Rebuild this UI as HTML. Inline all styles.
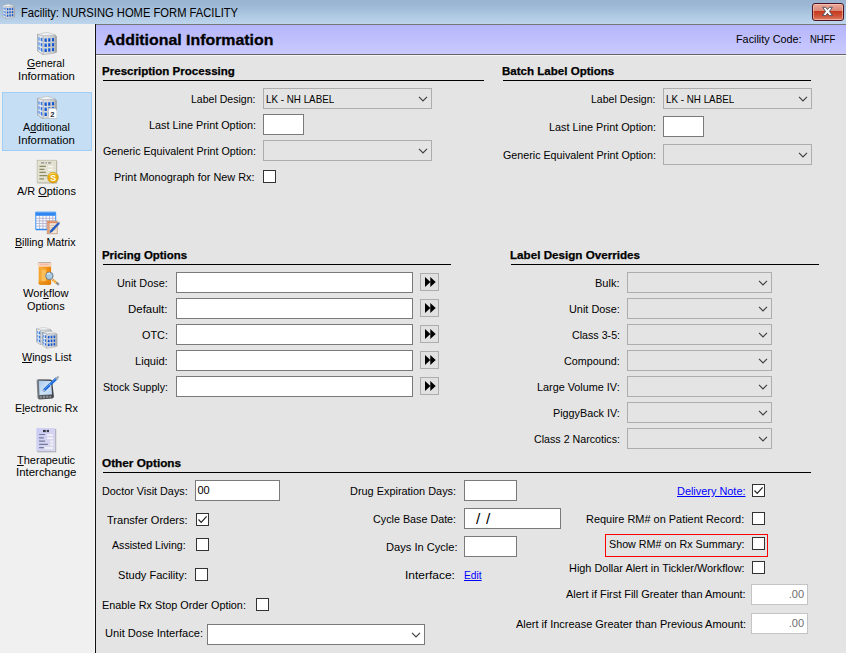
<!DOCTYPE html>
<html><head><meta charset="utf-8"><title>Facility</title>
<style>
html,body{margin:0;padding:0}
body{width:846px;height:653px;position:relative;overflow:hidden;background:#e4e4e4;font-family:"Liberation Sans",sans-serif;font-size:11px;color:#000}
#title{position:absolute;left:0;top:0;width:846px;height:24px;background:linear-gradient(#99b3d0 0%,#9db8d5 25%,#aac5df 55%,#b5cee7 80%,#bdd6ed 100%)}
#close{position:absolute;left:812px;top:3px;width:30px;height:16px;border:1px solid #4c1422;border-radius:3px;background:linear-gradient(#eaa999 0%,#dc8a78 41%,#c53a1d 45%,#cf5338 75%,#de8068 100%);box-shadow:inset 0 0 0 1px rgba(255,210,195,.55)}
#close svg{position:absolute;left:0;top:0}
#side{position:absolute;left:0;top:24px;width:94px;height:629px;background:#f0f0f0;border-right:1px solid #f8f8f8}
#sideb{position:absolute;left:95px;top:24px;width:1px;height:629px;background:#111}
#hdr{position:absolute;left:96px;top:24px;width:750px;height:31px;background:linear-gradient(#b5b5fb,#cacaff);border-top:1px solid #777;border-bottom:1px solid #666;box-sizing:border-box}
#hdrw{position:absolute;left:96px;top:55px;width:750px;height:1px;background:#f6f6f6}
.t{position:absolute;white-space:pre;line-height:16px;height:16px;font-size:11px;transform-origin:left center}
.t.h{line-height:20px;height:20px;margin-top:-2px}
.sec{font-weight:bold;-webkit-text-stroke:.25px #000}
.h{font-weight:bold;-webkit-text-stroke:.3px #000}
.hr{position:absolute;height:1px;background:#000}
.lnk{color:#0000ff;text-decoration:underline}
.sel{position:absolute;border:1px solid #adadad;background:#e4e4e4}
.sel.w{background:#fff;border-color:#7a7a7a}
.sel .st{position:absolute;left:3px;top:1px;line-height:16px;white-space:pre;transform-origin:left center;transform:scaleX(.96)}
.sel .chev{position:absolute;right:3px;top:50%;margin-top:-2.6px}
.inp{position:absolute;border:1px solid #7a7a7a;background:#fff}
.inp span{position:absolute;left:1.4px;top:2px;line-height:15px;white-space:pre}
.inp.date span{left:11.2px;top:3px;font-size:14px}
.inp.date i{font-style:normal;display:inline-block;width:9.9px;transform:scaleX(1.1);transform-origin:left center}
.inp.amt{border-color:#c4c4c4}
.inp.amt span{left:auto;right:3px;color:#6d6d6d;top:2px}
.cb{position:absolute;width:11px;height:11px;border:1px solid #333;background:#fff}
.btn{position:absolute;width:17px;height:16px;border:1px solid #adadad;background:#e1e1e1}
.btn svg{position:absolute;left:3.6px;top:3.2px}
.red{position:absolute;border:1px solid #f00}
.ico{position:absolute}
u{text-decoration:underline}
</style></head><body>
<div id="title"><div id="close"><svg width="30" height="16" viewBox="1 1 30 16"><path d="M10.7 4.3 L13.7 4.3 L15.5 6.5 L17.3 4.3 L20.3 4.3 L17.5 8.4 L20.5 12.6 L17.3 12.6 L15.5 10.3 L13.7 12.6 L10.5 12.6 L13.5 8.4 Z" fill="#fff" stroke="#454b5e" stroke-width=".9" stroke-linejoin="round"/></svg></div></div>
<svg class="ico" style="left:1.9px;top:4px" width="13.2" height="14.8" viewBox="0 0 20.2 23.2" preserveAspectRatio="none">
<defs><linearGradient id="bf5" x1="0" x2="1"><stop offset="0" stop-color="#e2e3e4"/><stop offset="1" stop-color="#bfc1c3"/></linearGradient>
<linearGradient id="bl5" x1="0" x2="1"><stop offset="0" stop-color="#c9cdd2"/><stop offset=".5" stop-color="#f2f3f5"/><stop offset="1" stop-color="#e2e4e7"/></linearGradient>
<linearGradient id="bw5" x1="0" x2="0" y1="0" y2="1"><stop offset="0" stop-color="#1f68e0"/><stop offset="1" stop-color="#0a48c0"/></linearGradient></defs>
<path d="M18 3.2 L20 4.2 L20 20.2 L18 21 Z" fill="#a4a8ac"/>
<path d="M0.3 2.4 L6.3 3.7 L6.3 22.8 L0.3 18.7 Z" fill="url(#bl5)" stroke="#858a8f" stroke-width=".6"/>
<path d="M6.3 3.7 L18.2 3.2 L18.2 21 L6.3 22.8 Z" fill="url(#bf5)" stroke="#a0a4a8" stroke-width=".5"/>
<path d="M0.3 2.4 L10.2 0.3 L18.9 3.1 L6.5 3.8 Z" fill="#f1f2f3" stroke="#a9adb1" stroke-width=".5"/>
<linearGradient id="bx5" x1="0" x2="1"><stop offset="0" stop-color="#7fb0f2"/><stop offset="1" stop-color="#2467d8"/></linearGradient>
<g fill="url(#bx5)">
<path d="M1.1 5 L5.3 6 L5.3 9.6 L1.1 8.2 Z"/>
<path d="M1.1 9.8 L5.3 11.3 L5.3 14.8 L1.1 12.9 Z"/>
<path d="M1.1 14.3 L5.3 16.5 L5.3 20 L1.1 17.3 Z"/></g>
<path d="M3.2 4 L3.2 20" stroke="#eef1f4" stroke-width=".9"/>
<g fill="url(#bw5)">
<rect x="7.5" y="6.4" width="2.3" height="3.4"/><rect x="11.2" y="6.2" width="2.2" height="3.4"/><rect x="15" y="6" width="2.1" height="3.3"/>
<rect x="7.5" y="11.5" width="2.3" height="3.4"/><rect x="11.2" y="11.2" width="2.2" height="3.4"/><rect x="15" y="11" width="2.1" height="3.3"/>
<rect x="7.5" y="16.6" width="2.3" height="3.4"/><rect x="11.2" y="16.2" width="2.2" height="3.4"/><rect x="15" y="15.8" width="2.1" height="3.3"/>
</g></svg>
<div id="side"></div><div id="sideb"></div>
<svg class="ico" style="left:36.8px;top:31.9px" width="20.2" height="23.2" viewBox="0 0 20.2 23.2" preserveAspectRatio="none">
<defs><linearGradient id="bf1" x1="0" x2="1"><stop offset="0" stop-color="#e2e3e4"/><stop offset="1" stop-color="#bfc1c3"/></linearGradient>
<linearGradient id="bl1" x1="0" x2="1"><stop offset="0" stop-color="#c9cdd2"/><stop offset=".5" stop-color="#f2f3f5"/><stop offset="1" stop-color="#e2e4e7"/></linearGradient>
<linearGradient id="bw1" x1="0" x2="0" y1="0" y2="1"><stop offset="0" stop-color="#1f68e0"/><stop offset="1" stop-color="#0a48c0"/></linearGradient></defs>
<path d="M18 3.2 L20 4.2 L20 20.2 L18 21 Z" fill="#a4a8ac"/>
<path d="M0.3 2.4 L6.3 3.7 L6.3 22.8 L0.3 18.7 Z" fill="url(#bl1)" stroke="#858a8f" stroke-width=".6"/>
<path d="M6.3 3.7 L18.2 3.2 L18.2 21 L6.3 22.8 Z" fill="url(#bf1)" stroke="#a0a4a8" stroke-width=".5"/>
<path d="M0.3 2.4 L10.2 0.3 L18.9 3.1 L6.5 3.8 Z" fill="#f1f2f3" stroke="#a9adb1" stroke-width=".5"/>
<linearGradient id="bx1" x1="0" x2="1"><stop offset="0" stop-color="#7fb0f2"/><stop offset="1" stop-color="#2467d8"/></linearGradient>
<g fill="url(#bx1)">
<path d="M1.1 5 L5.3 6 L5.3 9.6 L1.1 8.2 Z"/>
<path d="M1.1 9.8 L5.3 11.3 L5.3 14.8 L1.1 12.9 Z"/>
<path d="M1.1 14.3 L5.3 16.5 L5.3 20 L1.1 17.3 Z"/></g>
<path d="M3.2 4 L3.2 20" stroke="#eef1f4" stroke-width=".9"/>
<g fill="url(#bw1)">
<rect x="7.5" y="6.4" width="2.3" height="3.4"/><rect x="11.2" y="6.2" width="2.2" height="3.4"/><rect x="15" y="6" width="2.1" height="3.3"/>
<rect x="7.5" y="11.5" width="2.3" height="3.4"/><rect x="11.2" y="11.2" width="2.2" height="3.4"/><rect x="15" y="11" width="2.1" height="3.3"/>
<rect x="7.5" y="16.6" width="2.3" height="3.4"/><rect x="11.2" y="16.2" width="2.2" height="3.4"/><rect x="15" y="15.8" width="2.1" height="3.3"/>
</g></svg>
<div style="position:absolute;left:2px;top:92px;width:88px;height:57px;background:#c5def4;border:1px solid #9fcdf6"></div>
<svg class="ico" style="left:36.8px;top:95.9px" width="20.2" height="23.2" viewBox="0 0 20.2 23.2" preserveAspectRatio="none">
<defs><linearGradient id="bf2" x1="0" x2="1"><stop offset="0" stop-color="#e2e3e4"/><stop offset="1" stop-color="#bfc1c3"/></linearGradient>
<linearGradient id="bl2" x1="0" x2="1"><stop offset="0" stop-color="#c9cdd2"/><stop offset=".5" stop-color="#f2f3f5"/><stop offset="1" stop-color="#e2e4e7"/></linearGradient>
<linearGradient id="bw2" x1="0" x2="0" y1="0" y2="1"><stop offset="0" stop-color="#1f68e0"/><stop offset="1" stop-color="#0a48c0"/></linearGradient></defs>
<path d="M18 3.2 L20 4.2 L20 20.2 L18 21 Z" fill="#a4a8ac"/>
<path d="M0.3 2.4 L6.3 3.7 L6.3 22.8 L0.3 18.7 Z" fill="url(#bl2)" stroke="#858a8f" stroke-width=".6"/>
<path d="M6.3 3.7 L18.2 3.2 L18.2 21 L6.3 22.8 Z" fill="url(#bf2)" stroke="#a0a4a8" stroke-width=".5"/>
<path d="M0.3 2.4 L10.2 0.3 L18.9 3.1 L6.5 3.8 Z" fill="#f1f2f3" stroke="#a9adb1" stroke-width=".5"/>
<linearGradient id="bx2" x1="0" x2="1"><stop offset="0" stop-color="#7fb0f2"/><stop offset="1" stop-color="#2467d8"/></linearGradient>
<g fill="url(#bx2)">
<path d="M1.1 5 L5.3 6 L5.3 9.6 L1.1 8.2 Z"/>
<path d="M1.1 9.8 L5.3 11.3 L5.3 14.8 L1.1 12.9 Z"/>
<path d="M1.1 14.3 L5.3 16.5 L5.3 20 L1.1 17.3 Z"/></g>
<path d="M3.2 4 L3.2 20" stroke="#eef1f4" stroke-width=".9"/>
<g fill="url(#bw2)">
<rect x="7.5" y="6.4" width="2.3" height="3.4"/><rect x="11.2" y="6.2" width="2.2" height="3.4"/><rect x="15" y="6" width="2.1" height="3.3"/>
<rect x="7.5" y="11.5" width="2.3" height="3.4"/><rect x="11.2" y="11.2" width="2.2" height="3.4"/><rect x="15" y="11" width="2.1" height="3.3"/>
<rect x="7.5" y="16.6" width="2.3" height="3.4"/><rect x="11.2" y="16.2" width="2.2" height="3.4"/><rect x="15" y="15.8" width="2.1" height="3.3"/>
</g><path d="M11.3 12.2 L18 12.2 L20 14.2 L20 22.6 L11.3 22.6 Z" fill="#fdfdfd" stroke="#9aa2aa" stroke-width=".5"/><text x="13.2" y="20.8" font-size="7.5" font-weight="bold" font-family="Liberation Sans,sans-serif" fill="#1c2a3a">2</text></svg>
<svg class="ico" style="left:36px;top:159px" width="24" height="26" viewBox="0 0 24 26">
<rect x="1.8" y="1.9" width="19.4" height="22.6" fill="#8f8d7c" opacity=".55"/>
<rect x="1.1" y="1.2" width="19.2" height="22.6" fill="#e3e1d2" stroke="#b3b09c" stroke-width=".6"/>
<g stroke="#8a8a8a" stroke-width="1.1"><path d="M5 3.9h3.2M9.4 3.9h1.4M12 3.9h3.2"/></g>
<g stroke="#8c8b63" stroke-width="1.2"><path d="M3.4 7.4h6.4M3.4 10.4h5M3.4 13.4h6.4M3.4 16.6h8M3.4 19.8h4.6"/></g>
<g stroke="#f7f6ee" stroke-width="1.5"><path d="M12 7.6h5M12 10.8h5"/></g>
<circle cx="17" cy="18.6" r="5.3" fill="#e9ae0e"/>
<circle cx="17" cy="18.6" r="5.3" fill="none" stroke="#c48c08" stroke-width=".7"/>
<path d="M12.3 17.2 A4.9 4.9 0 0 1 20.6 15 A7.5 7.5 0 0 0 12.3 17.2Z" fill="#f9e277"/>
<text x="14.3" y="21.9" font-size="8.8" font-weight="bold" font-family="Liberation Sans,sans-serif" fill="#fff">S</text></svg>
<svg class="ico" style="left:35px;top:211px" width="25" height="24" viewBox="0 0 25 24">
<rect x="0.4" y="0.9" width="20.6" height="18.2" rx=".8" fill="#fbfbff"/>
<g stroke="#b4b4cf" stroke-width=".9"><path d="M1 7.3h19.6M1 9.9h19.6M1 12.5h19.6M1 15.1h19.6M4.6 4.6v13.6M7.9 4.6v13.6M11.2 4.6v13.6M14.5 4.6v13.6M17.8 4.6v13.6"/></g>
<rect x="0.4" y="0.9" width="20.6" height="3.9" fill="#2f87f2"/>
<path d="M0.6 1.4h20.2" stroke="#8cc4fa" stroke-width=".9"/>
<rect x="0.75" y="1.25" width="19.9" height="17.5" rx=".8" fill="none" stroke="#4b9bf3" stroke-width="1.1"/>
<path d="M0.9 18.4h19.8" stroke="#2f87f2" stroke-width="1.3"/>
<rect x="12.2" y="10" width="10" height="12.8" fill="#f3e6d8" stroke="#b98f74" stroke-width=".7"/>
<path d="M12.4 10.2h9.6v2h-9.6z" fill="#dd9068"/><path d="M12.4 10.2h2.4v12.4h-2.4z" fill="#d98c62" opacity=".75"/>
<g stroke="#b7a692" stroke-width=".7"><path d="M15.6 14.4h4M15.6 16.6h3M15.6 18.8h5"/></g>
<path d="M15.4 19.6 L23.2 11.4 L24.5 12.8 L16.8 20.9 L15 21.5 Z" fill="#1f5fcf" stroke="#17408f" stroke-width=".5"/>
<path d="M23.2 11.4 L24.2 10.6 L25 11.6 L24.5 12.8Z" fill="#9aa3ad"/></svg>
<svg class="ico" style="left:36px;top:261px" width="24" height="25" viewBox="0 0 24 25">
<defs><linearGradient id="wb" x1="0" x2="1"><stop offset="0" stop-color="#f6a024"/><stop offset=".2" stop-color="#f7ab3a"/><stop offset=".75" stop-color="#f18f10"/><stop offset="1" stop-color="#e67e06"/></linearGradient>
<linearGradient id="wb2" x1="0" x2="0" y1="0" y2="1"><stop offset="0.7" stop-color="#e88408" stop-opacity="0"/><stop offset="1" stop-color="#d97604" stop-opacity=".8"/></linearGradient></defs>
<rect x="2.7" y="5" width="12.4" height="18.7" rx="1.4" fill="url(#wb)"/>
<rect x="2.7" y="5" width="12.4" height="18.7" rx="1.4" fill="url(#wb2)"/>
<rect x="5.6" y="8.6" width="4.4" height="11.4" fill="#f9c465" opacity=".85"/>
<rect x="1.7" y="1.5" width="13.9" height="4.3" rx="1" fill="#f8d3bd"/>
<path d="M2.4 1.5h12.5" stroke="#a9a5a3" stroke-width=".8"/>
<path d="M4 3.4h9" stroke="#f6b8a0" stroke-width="1.2"/>
<path d="M16.6 18.6 L21.4 22.6" stroke="#f08a2a" stroke-width="2.3"/>
<path d="M17.6 19.5l.9.7M19.3 20.9l.9.7" stroke="#f8dc6a" stroke-width="2.3"/>
<path d="M21 22.2 L22.2 23.2" stroke="#8e9399" stroke-width="2.3" stroke-linecap="round"/>
<circle cx="13.4" cy="14.9" r="3.7" fill="#a9cbe3" stroke="#737b83" stroke-width="1"/>
<path d="M11.2 13.6 A2.6 2.6 0 0 1 14 12.2" stroke="#e8f3fa" stroke-width="1.1" fill="none"/></svg>
<svg class="ico" style="left:36px;top:326.6px" width="16" height="18.4" viewBox="0 0 20.2 23.2" preserveAspectRatio="none">
<defs><linearGradient id="bf3" x1="0" x2="1"><stop offset="0" stop-color="#e2e3e4"/><stop offset="1" stop-color="#bfc1c3"/></linearGradient>
<linearGradient id="bl3" x1="0" x2="1"><stop offset="0" stop-color="#c9cdd2"/><stop offset=".5" stop-color="#f2f3f5"/><stop offset="1" stop-color="#e2e4e7"/></linearGradient>
<linearGradient id="bw3" x1="0" x2="0" y1="0" y2="1"><stop offset="0" stop-color="#1f68e0"/><stop offset="1" stop-color="#0a48c0"/></linearGradient></defs>
<path d="M18 3.2 L20 4.2 L20 20.2 L18 21 Z" fill="#a4a8ac"/>
<path d="M0.3 2.4 L6.3 3.7 L6.3 22.8 L0.3 18.7 Z" fill="url(#bl3)" stroke="#858a8f" stroke-width=".6"/>
<path d="M6.3 3.7 L18.2 3.2 L18.2 21 L6.3 22.8 Z" fill="url(#bf3)" stroke="#a0a4a8" stroke-width=".5"/>
<path d="M0.3 2.4 L10.2 0.3 L18.9 3.1 L6.5 3.8 Z" fill="#f1f2f3" stroke="#a9adb1" stroke-width=".5"/>
<linearGradient id="bx3" x1="0" x2="1"><stop offset="0" stop-color="#7fb0f2"/><stop offset="1" stop-color="#2467d8"/></linearGradient>
<g fill="url(#bx3)">
<path d="M1.1 5 L5.3 6 L5.3 9.6 L1.1 8.2 Z"/>
<path d="M1.1 9.8 L5.3 11.3 L5.3 14.8 L1.1 12.9 Z"/>
<path d="M1.1 14.3 L5.3 16.5 L5.3 20 L1.1 17.3 Z"/></g>
<path d="M3.2 4 L3.2 20" stroke="#eef1f4" stroke-width=".9"/>
<g fill="url(#bw3)">
<rect x="7.5" y="6.4" width="2.3" height="3.4"/><rect x="11.2" y="6.2" width="2.2" height="3.4"/><rect x="15" y="6" width="2.1" height="3.3"/>
<rect x="7.5" y="11.5" width="2.3" height="3.4"/><rect x="11.2" y="11.2" width="2.2" height="3.4"/><rect x="15" y="11" width="2.1" height="3.3"/>
<rect x="7.5" y="16.6" width="2.3" height="3.4"/><rect x="11.2" y="16.2" width="2.2" height="3.4"/><rect x="15" y="15.8" width="2.1" height="3.3"/>
</g></svg>
<svg class="ico" style="left:42.4px;top:331.2px" width="15.6" height="17.5" viewBox="0 0 20.2 23.2" preserveAspectRatio="none">
<defs><linearGradient id="bf4" x1="0" x2="1"><stop offset="0" stop-color="#e2e3e4"/><stop offset="1" stop-color="#bfc1c3"/></linearGradient>
<linearGradient id="bl4" x1="0" x2="1"><stop offset="0" stop-color="#c9cdd2"/><stop offset=".5" stop-color="#f2f3f5"/><stop offset="1" stop-color="#e2e4e7"/></linearGradient>
<linearGradient id="bw4" x1="0" x2="0" y1="0" y2="1"><stop offset="0" stop-color="#1f68e0"/><stop offset="1" stop-color="#0a48c0"/></linearGradient></defs>
<path d="M18 3.2 L20 4.2 L20 20.2 L18 21 Z" fill="#a4a8ac"/>
<path d="M0.3 2.4 L6.3 3.7 L6.3 22.8 L0.3 18.7 Z" fill="url(#bl4)" stroke="#858a8f" stroke-width=".6"/>
<path d="M6.3 3.7 L18.2 3.2 L18.2 21 L6.3 22.8 Z" fill="url(#bf4)" stroke="#a0a4a8" stroke-width=".5"/>
<path d="M0.3 2.4 L10.2 0.3 L18.9 3.1 L6.5 3.8 Z" fill="#f1f2f3" stroke="#a9adb1" stroke-width=".5"/>
<linearGradient id="bx4" x1="0" x2="1"><stop offset="0" stop-color="#7fb0f2"/><stop offset="1" stop-color="#2467d8"/></linearGradient>
<g fill="url(#bx4)">
<path d="M1.1 5 L5.3 6 L5.3 9.6 L1.1 8.2 Z"/>
<path d="M1.1 9.8 L5.3 11.3 L5.3 14.8 L1.1 12.9 Z"/>
<path d="M1.1 14.3 L5.3 16.5 L5.3 20 L1.1 17.3 Z"/></g>
<path d="M3.2 4 L3.2 20" stroke="#eef1f4" stroke-width=".9"/>
<g fill="url(#bw4)">
<rect x="7.5" y="6.4" width="2.3" height="3.4"/><rect x="11.2" y="6.2" width="2.2" height="3.4"/><rect x="15" y="6" width="2.1" height="3.3"/>
<rect x="7.5" y="11.5" width="2.3" height="3.4"/><rect x="11.2" y="11.2" width="2.2" height="3.4"/><rect x="15" y="11" width="2.1" height="3.3"/>
<rect x="7.5" y="16.6" width="2.3" height="3.4"/><rect x="11.2" y="16.2" width="2.2" height="3.4"/><rect x="15" y="15.8" width="2.1" height="3.3"/>
</g></svg>
<svg class="ico" style="left:35px;top:375px" width="25" height="26" viewBox="0 0 25 26">
<defs><linearGradient id="pd" x1="0" x2="1"><stop offset="0" stop-color="#8f9499"/><stop offset=".18" stop-color="#5b6066"/><stop offset="1" stop-color="#3d4045"/></linearGradient>
<linearGradient id="ps" x1="0" x2="1" y1="0" y2="1"><stop offset="0" stop-color="#a9c9ee"/><stop offset=".55" stop-color="#cfe2f7"/><stop offset="1" stop-color="#bcd6f3"/></linearGradient></defs>
<path d="M1.6 6 Q1.3 4.2 3.2 4.2 L15.4 4.6 Q17 4.7 17.2 6.2 L18.9 21.6 Q19 23.3 17.2 23.5 L4.6 24.6 Q2.7 24.6 2.5 22.8 Z" fill="url(#pd)"/>
<path d="M3.9 5.8 L16 6 L17 19.6 L4.4 20 Z" fill="url(#ps)"/>
<g fill="#8b9096"><rect x="5" y="21.2" width="1.9" height="1.9"/><rect x="8" y="20.8" width="2.2" height="2.2"/><rect x="11.2" y="20.6" width="2.2" height="2.2"/><rect x="14.4" y="20.8" width="1.9" height="1.9"/></g>
<path d="M9 15.2 L21.4 3.6" stroke="#1563d6" stroke-width="2.7" stroke-linecap="round"/>
<path d="M9.4 14.4 L21 3.4" stroke="#5a9af0" stroke-width=".9"/>
<path d="M14.6 9.3 L16 10.9" stroke="#c9d2dc" stroke-width="1"/>
<path d="M21.4 3.6 L23 2.2" stroke="#a4acb5" stroke-width="2.2" stroke-linecap="round"/>
<path d="M8 16.4 L8.6 14.2 L10.2 15.8 Z" fill="#dfe4ea" stroke="#9aa2aa" stroke-width=".3"/></svg>
<svg class="ico" style="left:36px;top:427px" width="21" height="26" viewBox="0 0 21 26">
<defs><linearGradient id="td" x1="0" x2="1" y1="0" y2="1"><stop offset="0" stop-color="#c9c9f6"/><stop offset="1" stop-color="#dcdcec"/></linearGradient></defs>
<rect x="1.2" y="1.9" width="19" height="23.4" fill="#8e8e9e" opacity=".7"/>
<rect x="0.4" y="1.2" width="18.8" height="23" fill="url(#td)"/>
<rect x="7" y="2.9" width="2.7" height="2.2" fill="#34343f"/><rect x="10.7" y="2.9" width="2.3" height="2.2" fill="#3c3c48"/>
<g stroke="#747b9c" stroke-width="1.2"><path d="M3.1 7.5h5.9M3.1 10.9h4.7M3.1 14.2h5.9M3.1 17.4h8.8M3.1 20.6h4.7"/></g>
<g stroke="#f6f6fc" stroke-width="1.5"><path d="M11 8h6M11 11.2h6M14.4 14.4h2.6M14.4 17.6h2.6M8.7 20.9h8.3"/></g></svg>
<span class="t l " style="left:27.2px;top:55px;transform:scaleX(0.9581)"><u>G</u>eneral</span>
<span class="t l " style="left:18.1px;top:68px;transform:scaleX(1.0321)">Information</span>
<span class="t l " style="left:22.7px;top:119px;transform:scaleX(0.9704)">A<u>d</u>ditional</span>
<span class="t l " style="left:18.1px;top:132px;transform:scaleX(1.0321)">Information</span>
<span class="t l " style="left:17px;top:183px;transform:scaleX(0.9928)">A/R <u>O</u>ptions</span>
<span class="t l " style="left:15.4px;top:234px;transform:scaleX(0.9702)"><u>B</u>illing Matrix</span>
<span class="t l " style="left:23.4px;top:285px;transform:scaleX(1.0126)">Wor<u>k</u>flow</span>
<span class="t l " style="left:27px;top:298px;transform:scaleX(0.9915)">Options</span>
<span class="t l " style="left:22.2px;top:349px;transform:scaleX(0.9754)"><u>W</u>ings List</span>
<span class="t l " style="left:15px;top:400px;transform:scaleX(0.9703)">E<u>l</u>ectronic Rx</span>
<span class="t l " style="left:17.2px;top:451.5px;transform:scaleX(0.9998)"><u>T</u>herapeutic</span>
<span class="t l " style="left:15.8px;top:464px;transform:scaleX(1.0394)">Interchange</span>
<div id="hdr"></div><div id="hdrw"></div>
<span class="t l h" style="left:104px;top:32px;font-size:15px;transform:scaleX(1.0589)">Additional Information</span>
<span class="t l tt" style="left:20.9px;top:5px;font-size:12px;transform:scaleX(0.933)">Facility: NURSING HOME FORM FACILITY</span>
<span class="t l sec" style="left:102.2px;top:63px;transform:scaleX(1.0502)">Prescription Processing</span>
<div class="hr" style="left:103px;top:80px;width:381px"></div>
<span class="t l sec" style="left:502.2px;top:63px;transform:scaleX(1.0498)">Batch Label Options</span>
<div class="hr" style="left:503px;top:80px;width:308px"></div>
<span class="t l " style="left:190.7px;top:91px;transform:scaleX(0.9587)">Label Design:</span>
<div class="sel" style="left:263px;top:88px;width:167px;height:19px"><span class="st"></span><svg class="chev" width="10" height="6" viewBox="0 0 10 6"><path d="M1 0.8 L5 4.9 L9 0.8" fill="none" stroke="#404040" stroke-width="1.15"/></svg></div>
<span class="t l " style="left:265.7px;top:91.2px;transform:scaleX(0.8924)">LK - NH LABEL</span>
<span class="t l " style="left:148.8px;top:117px;transform:scaleX(0.984)">Last Line Print Option:</span>
<div class="inp " style="left:263px;top:114px;width:39px;height:19px"><span></span></div>
<span class="t l " style="left:102.9px;top:143px;transform:scaleX(0.9737)">Generic Equivalent Print Option:</span>
<div class="sel" style="left:263px;top:140px;width:167px;height:19px"><span class="st"></span><svg class="chev" width="10" height="6" viewBox="0 0 10 6"><path d="M1 0.8 L5 4.9 L9 0.8" fill="none" stroke="#404040" stroke-width="1.15"/></svg></div>
<span class="t l " style="left:113.6px;top:169px;transform:scaleX(0.9912)">Print Monograph for New Rx:</span>
<div class="cb" style="left:263px;top:170px"></div>
<span class="t l " style="left:590.7px;top:91px;transform:scaleX(0.9587)">Label Design:</span>
<div class="sel" style="left:663px;top:88px;width:147px;height:19px"><span class="st"></span><svg class="chev" width="10" height="6" viewBox="0 0 10 6"><path d="M1 0.8 L5 4.9 L9 0.8" fill="none" stroke="#404040" stroke-width="1.15"/></svg></div>
<span class="t l " style="left:665.7px;top:91.2px;transform:scaleX(0.8924)">LK - NH LABEL</span>
<span class="t l " style="left:548.8px;top:119px;transform:scaleX(0.984)">Last Line Print Option:</span>
<div class="inp " style="left:663px;top:116px;width:39px;height:19px"><span></span></div>
<span class="t l " style="left:502.9px;top:147px;transform:scaleX(0.9737)">Generic Equivalent Print Option:</span>
<div class="sel" style="left:663px;top:144px;width:147px;height:19px"><span class="st"></span><svg class="chev" width="10" height="6" viewBox="0 0 10 6"><path d="M1 0.8 L5 4.9 L9 0.8" fill="none" stroke="#404040" stroke-width="1.15"/></svg></div>
<span class="t l sec" style="left:102.2px;top:247px;transform:scaleX(1.039)">Pricing Options</span>
<div class="hr" style="left:103px;top:264px;width:348px"></div>
<span class="t l " style="left:116.5px;top:275px;transform:scaleX(0.9872)">Unit Dose:</span>
<div class="inp " style="left:176px;top:272px;width:235px;height:19px"><span></span></div>
<div class="btn" style="left:420px;top:273px"><svg width="11" height="10" viewBox="0 0 11 10"><path d="M0 0 L5.4 5 L0 10 Z M5.3 0 L10.7 5 L5.3 10 Z" fill="#000"/></svg></div>
<span class="t l " style="left:127.7px;top:301px;transform:scaleX(1.0416)">Default:</span>
<div class="inp " style="left:176px;top:298px;width:235px;height:19px"><span></span></div>
<div class="btn" style="left:420px;top:299px"><svg width="11" height="10" viewBox="0 0 11 10"><path d="M0 0 L5.4 5 L0 10 Z M5.3 0 L10.7 5 L5.3 10 Z" fill="#000"/></svg></div>
<span class="t l " style="left:141.9px;top:327px;transform:scaleX(0.9893)">OTC:</span>
<div class="inp " style="left:176px;top:324px;width:235px;height:19px"><span></span></div>
<div class="btn" style="left:420px;top:325px"><svg width="11" height="10" viewBox="0 0 11 10"><path d="M0 0 L5.4 5 L0 10 Z M5.3 0 L10.7 5 L5.3 10 Z" fill="#000"/></svg></div>
<span class="t l " style="left:135.2px;top:353px;transform:scaleX(1.0086)">Liquid:</span>
<div class="inp " style="left:176px;top:350px;width:235px;height:19px"><span></span></div>
<div class="btn" style="left:420px;top:351px"><svg width="11" height="10" viewBox="0 0 11 10"><path d="M0 0 L5.4 5 L0 10 Z M5.3 0 L10.7 5 L5.3 10 Z" fill="#000"/></svg></div>
<span class="t l " style="left:102.9px;top:379px;transform:scaleX(0.9663)">Stock Supply:</span>
<div class="inp " style="left:176px;top:376px;width:235px;height:19px"><span></span></div>
<div class="btn" style="left:420px;top:377px"><svg width="11" height="10" viewBox="0 0 11 10"><path d="M0 0 L5.4 5 L0 10 Z M5.3 0 L10.7 5 L5.3 10 Z" fill="#000"/></svg></div>
<span class="t l sec" style="left:510.2px;top:247px;transform:scaleX(1.0579)">Label Design Overrides</span>
<div class="hr" style="left:511px;top:264px;width:308px"></div>
<span class="t l " style="left:595.18px;top:275px;transform:scaleX(1.0025)">Bulk:</span>
<div class="sel" style="left:627px;top:272px;width:143px;height:19px"><span class="st"></span><svg class="chev" width="10" height="6" viewBox="0 0 10 6"><path d="M1 0.8 L5 4.9 L9 0.8" fill="none" stroke="#404040" stroke-width="1.15"/></svg></div>
<span class="t l " style="left:568.9px;top:301px;transform:scaleX(0.9893)">Unit Dose:</span>
<div class="sel" style="left:627px;top:298px;width:143px;height:19px"><span class="st"></span><svg class="chev" width="10" height="6" viewBox="0 0 10 6"><path d="M1 0.8 L5 4.9 L9 0.8" fill="none" stroke="#404040" stroke-width="1.15"/></svg></div>
<span class="t l " style="left:571.64px;top:327px;transform:scaleX(0.9705)">Class 3-5:</span>
<div class="sel" style="left:627px;top:324px;width:143px;height:19px"><span class="st"></span><svg class="chev" width="10" height="6" viewBox="0 0 10 6"><path d="M1 0.8 L5 4.9 L9 0.8" fill="none" stroke="#404040" stroke-width="1.15"/></svg></div>
<span class="t l " style="left:563.5px;top:353px;transform:scaleX(0.9797)">Compound:</span>
<div class="sel" style="left:627px;top:350px;width:143px;height:19px"><span class="st"></span><svg class="chev" width="10" height="6" viewBox="0 0 10 6"><path d="M1 0.8 L5 4.9 L9 0.8" fill="none" stroke="#404040" stroke-width="1.15"/></svg></div>
<span class="t l " style="left:537.01px;top:379px;transform:scaleX(0.9847)">Large Volume IV:</span>
<div class="sel" style="left:627px;top:376px;width:143px;height:19px"><span class="st"></span><svg class="chev" width="10" height="6" viewBox="0 0 10 6"><path d="M1 0.8 L5 4.9 L9 0.8" fill="none" stroke="#404040" stroke-width="1.15"/></svg></div>
<span class="t l " style="left:553.01px;top:405px;transform:scaleX(0.9798)">PiggyBack IV:</span>
<div class="sel" style="left:627px;top:402px;width:143px;height:19px"><span class="st"></span><svg class="chev" width="10" height="6" viewBox="0 0 10 6"><path d="M1 0.8 L5 4.9 L9 0.8" fill="none" stroke="#404040" stroke-width="1.15"/></svg></div>
<span class="t l " style="left:533.7px;top:431px;transform:scaleX(0.9703)">Class 2 Narcotics:</span>
<div class="sel" style="left:627px;top:428px;width:143px;height:19px"><span class="st"></span><svg class="chev" width="10" height="6" viewBox="0 0 10 6"><path d="M1 0.8 L5 4.9 L9 0.8" fill="none" stroke="#404040" stroke-width="1.15"/></svg></div>
<span class="t l sec" style="left:102.2px;top:455px;transform:scaleX(1.0696)">Other Options</span>
<div class="hr" style="left:103px;top:472px;width:708px"></div>
<span class="t l " style="left:102px;top:483px;transform:scaleX(0.9826)">Doctor Visit Days:</span>
<div class="inp " style="left:195px;top:480px;width:83px;height:19px"><span>00</span></div>
<span class="t l " style="left:107.07px;top:512px;transform:scaleX(1.0043)">Transfer Orders:</span>
<div class="cb" style="left:196px;top:513px"><svg width="11" height="11" viewBox="0 0 11 11" style="position:absolute;left:0;top:0"><path d="M1.5 5.5 L4.2 8.3 L9.6 2.3" fill="none" stroke="#222" stroke-width="1.2"/></svg></div>
<span class="t l " style="left:111.5px;top:537px;transform:scaleX(0.9644)">Assisted Living:</span>
<div class="cb" style="left:196px;top:538px"></div>
<span class="t l " style="left:117.8px;top:567px;transform:scaleX(1.0078)">Study Facility:</span>
<div class="cb" style="left:195px;top:568px"></div>
<span class="t l " style="left:102px;top:597px;transform:scaleX(0.9847)">Enable Rx Stop Order Option:</span>
<div class="cb" style="left:256px;top:598px"></div>
<span class="t l " style="left:104.88px;top:625px;transform:scaleX(1.0082)">Unit Dose Interface:</span>
<div class="sel w" style="left:207px;top:624px;width:216px;height:19px"><span class="st"></span><svg class="chev" width="10" height="6" viewBox="0 0 10 6"><path d="M1 0.8 L5 4.9 L9 0.8" fill="none" stroke="#404040" stroke-width="1.15"/></svg></div>
<span class="t l " style="left:349.7px;top:483px;transform:scaleX(0.9916)">Drug Expiration Days:</span>
<div class="inp " style="left:464px;top:480px;width:51px;height:19px"><span></span></div>
<span class="t l " style="left:372.7px;top:511px;transform:scaleX(0.9778)">Cycle Base Date:</span>
<div class="inp date" style="left:464px;top:508px;width:95px;height:19px"><span><i>/</i><i>/</i></span></div>
<span class="t l " style="left:386.18px;top:539px;transform:scaleX(1.0098)">Days In Cycle:</span>
<div class="inp " style="left:464px;top:536px;width:51px;height:19px"><span></span></div>
<span class="t l " style="left:405px;top:567px;transform:scaleX(1.0881)">Interface:</span>
<span class="t l lnk" style="left:464.2px;top:567px;transform:scaleX(0.9278)">Edit</span>
<span class="t l lnk" style="left:677px;top:483px;transform:scaleX(0.9916)">Delivery Note:</span>
<div class="cb" style="left:752px;top:484px"><svg width="11" height="11" viewBox="0 0 11 11" style="position:absolute;left:0;top:0"><path d="M1.5 5.5 L4.2 8.3 L9.6 2.3" fill="none" stroke="#222" stroke-width="1.2"/></svg></div>
<span class="t l " style="left:586.18px;top:511px;transform:scaleX(0.9953)">Require RM# on Patient Record:</span>
<div class="cb" style="left:752px;top:512px"></div>
<div class="red" style="left:605px;top:534px;width:161px;height:21px"></div>
<span class="t l " style="left:608.9px;top:536px;transform:scaleX(0.9765)">Show RM# on Rx Summary:</span>
<div class="cb" style="left:752px;top:537px"></div>
<span class="t l " style="left:568.8px;top:560px;transform:scaleX(0.9917)">High Dollar Alert in Tickler/Workflow:</span>
<div class="cb" style="left:752px;top:561px"></div>
<span class="t l " style="left:565.6px;top:586px;transform:scaleX(0.9925)">Alert if First Fill Greater than Amount:</span>
<div class="inp amt" style="left:751px;top:584px;width:55px;height:19px"><span>.00</span></div>
<span class="t l " style="left:515.9px;top:615.5px;transform:scaleX(0.9978)">Alert if Increase Greater than Previous Amount:</span>
<div class="inp amt" style="left:751px;top:613px;width:55px;height:19px"><span>.00</span></div>
<span class="t l " style="left:735.8px;top:31px;transform:scaleX(0.9844)">Facility Code:</span>
<span class="t l " style="left:809.88px;top:31px;transform:scaleX(0.8633)">NHFF</span>
</body></html>
